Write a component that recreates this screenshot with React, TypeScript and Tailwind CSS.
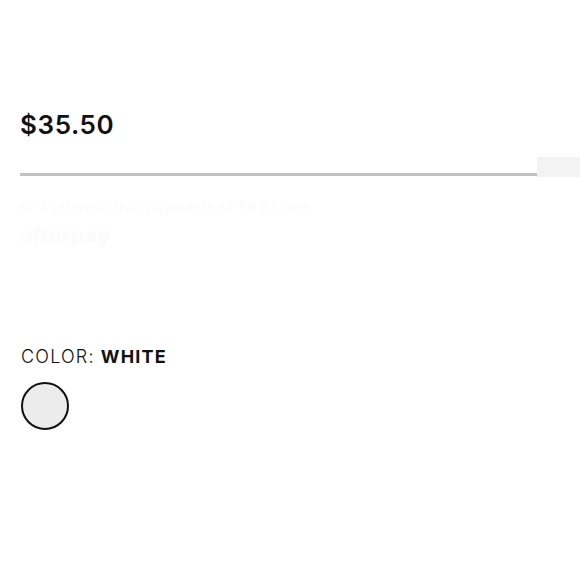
import React from "react";

export default function App() {
  return (
    <div className="w-[580px] h-[580px] bg-white overflow-hidden" style={{ fontFamily: "Inter, 'Open Sans', sans-serif" }}>
      <div className="pt-[109px]">
        <div className="pl-[20px] text-[26px] leading-[32px] font-semibold text-[#111] tracking-[0.6px]">$35.50</div>
        <div className="mt-[16px] flex items-end">
          <div className="ml-[20px] w-[517px] h-[3px] bg-[#c2c2c2] mb-[1px]"></div>
          <div className="w-[43px] h-[20px] bg-[#f3f3f3]"></div>
        </div>
        <div className="pl-[20px] mt-[22px] text-[14px] leading-[18px] text-[#fbfbfb] tracking-[0.5px]">
          or 4 interest-free payments of $8.88 with
        </div>
        <div className="pl-[20px] mt-[6px] text-[22px] leading-[24px] font-bold text-[#fbfbfb]">afterpay</div>
        <div className="pl-[21px] mt-[98px] flex items-baseline text-[18px] leading-[24px] tracking-[1.2px] text-[#111]">
          <span className="font-light">COLOR:</span>
          <span className="ml-[6px] font-bold">WHITE</span>
        </div>
        <div className="pl-[21px] mt-[13px]">
          <div className="w-[48px] h-[48px] rounded-full border-2 border-[#111] bg-[#ececec]"></div>
        </div>
      </div>
    </div>
  );
}
